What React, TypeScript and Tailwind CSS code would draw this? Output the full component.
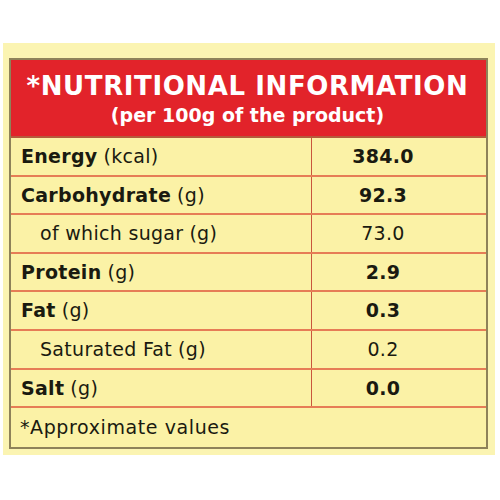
import React from 'react';

type Row = { label: string; unit: string; value: string; bold: boolean };

const rows: Row[] = [
    { label: 'Energy', unit: '(kcal)', value: '384.0', bold: true },
    { label: 'Carbohydrate', unit: '(g)', value: '92.3', bold: true },
    { label: 'of which sugar', unit: '(g)', value: '73.0', bold: false },
    { label: 'Protein', unit: '(g)', value: '2.9', bold: true },
    { label: 'Fat', unit: '(g)', value: '0.3', bold: true },
    { label: 'Saturated Fat', unit: '(g)', value: '0.2', bold: false },
    { label: 'Salt', unit: '(g)', value: '0.0', bold: true },
];

const App = () => {
    return (
        <div className="w-[500px] h-[500px] bg-white pt-[43px] font-['DejaVu_Sans',sans-serif]">
            <div className="ml-[3px] w-[492px] h-[412px] bg-[#fbf4b2] pt-[15px] pl-[6px]">
                <div className="w-[479px] border-2 border-[#8e8259] bg-[#fbf2a6]">
                    <div className="h-[78px] bg-[#e2232a] border-b-2 border-[#b65a3c] flex flex-col items-center text-white pt-[11px] pr-[2px]">
                        <div className="text-[26px] leading-[31px] font-bold tracking-[0.6px]">*NUTRITIONAL INFORMATION</div>
                        <div className="text-[19px] leading-[26px] font-bold">(per 100g of the product)</div>
                    </div>
                    {rows.map((r) => (
                        <div key={r.label} className="flex h-[38.6px] border-b-2 border-[#e67d56] text-[#1a1a10] text-[19px] tracking-[0.3px]">
                            <div className={`w-[301px] border-r border-[#c9573d] flex items-center ${r.bold ? 'pl-[10px]' : 'pl-[29px]'}`}>
                                <span className={r.bold ? 'font-bold' : ''}>{r.label}</span>
                                <span className="ml-[6px]">{r.unit}</span>
                            </div>
                            <div className={`flex-1 flex items-center justify-center pr-[32px] ${r.bold ? 'font-bold' : ''}`}>{r.value}</div>
                        </div>
                    ))}
                    <div className="h-[39px] flex items-center pl-[9px] text-[19px] tracking-[0.6px] text-[#1a1a10]">*Approximate values</div>
                </div>
            </div>
        </div>
    );
};

export default App;
